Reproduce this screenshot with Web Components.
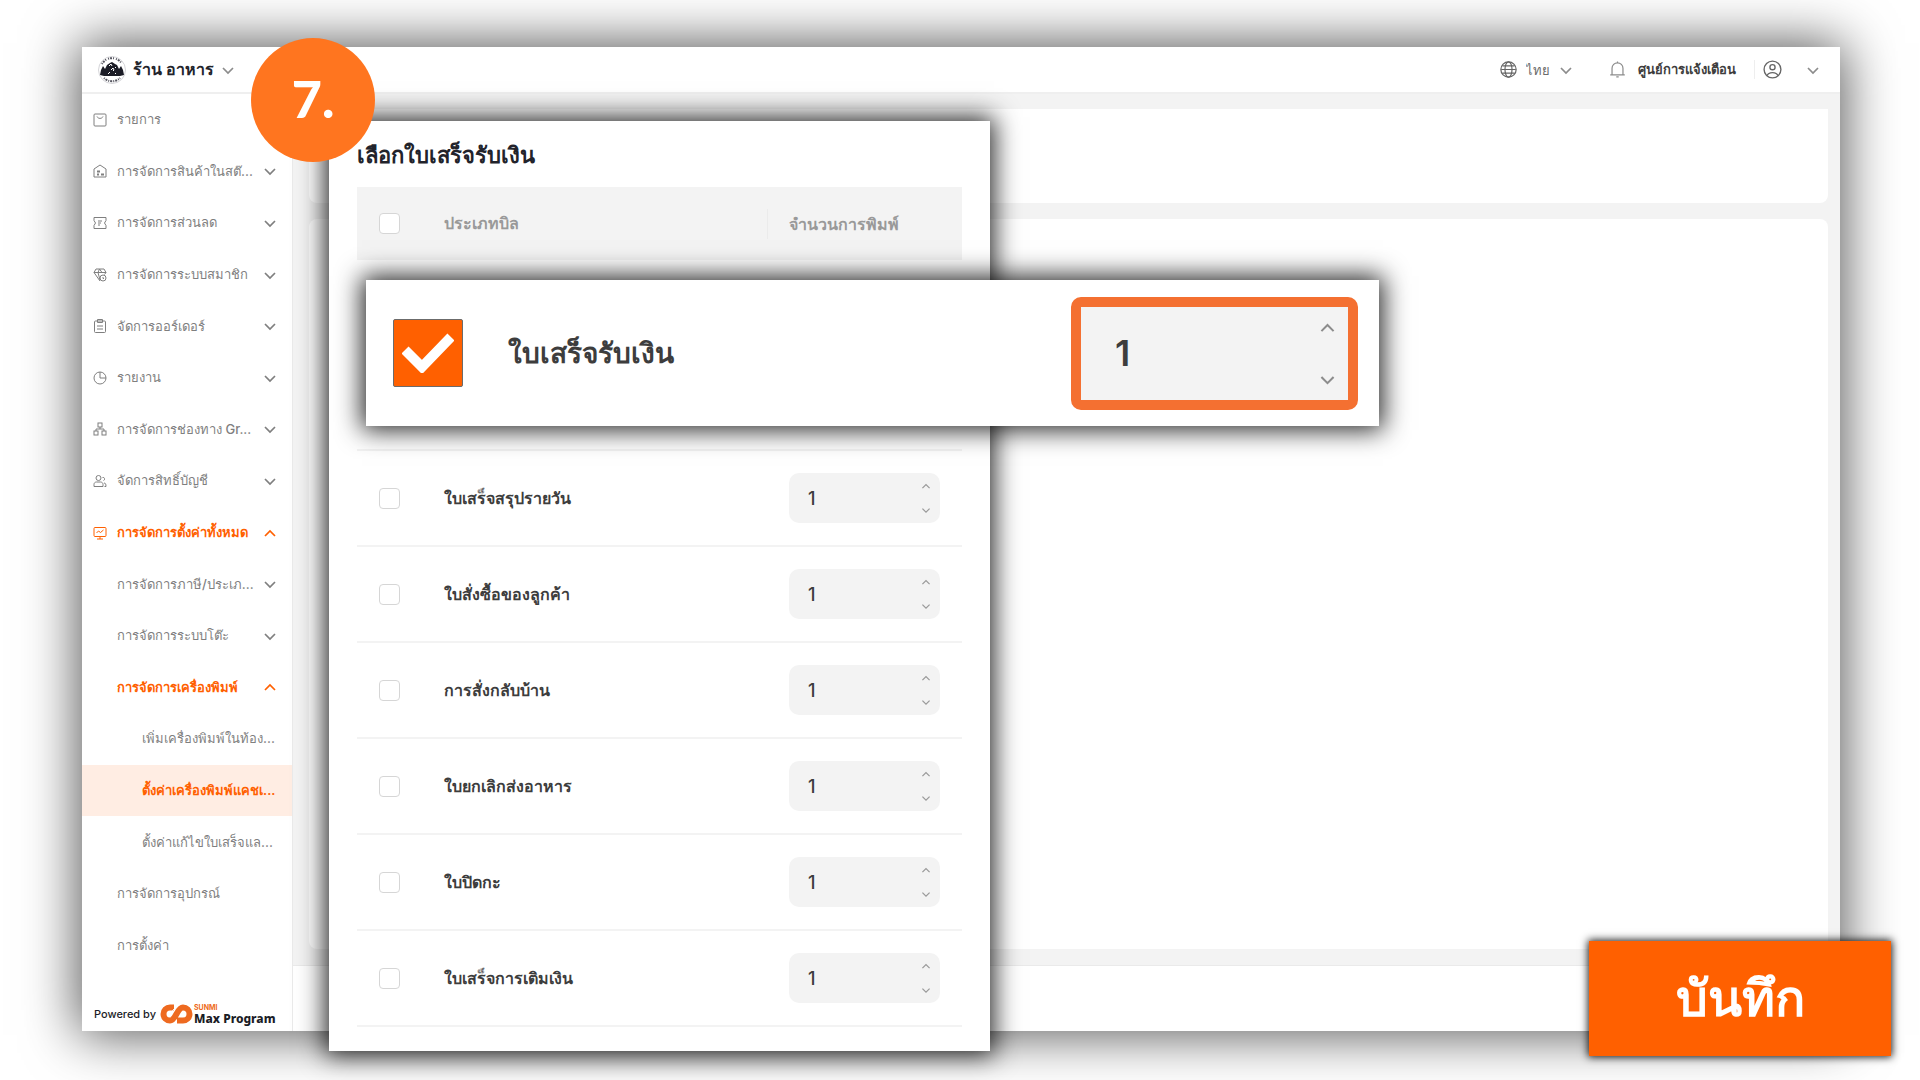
<!DOCTYPE html>
<html lang="th">
<head>
<meta charset="utf-8">
<title>ตั้งค่าเครื่องพิมพ์แคชเชียร์</title>
<style>
  html, body {
    height: 100%;
    margin: 0;
  }

  body {
    background: #fff;
    color: #3d3d3d;
    font-family: Inter, 'Noto Sans', 'Open Sans', sans-serif;
    overflow: hidden;
  }
</style>
</head>
<body>
<printer-page></printer-page>

<script>
const ICONS = {
  down: '<path d="M2 5l5 5 5-5" stroke-width="1.700"/>',
  up: '<path d="M2 10l5-5 5 5" stroke-width="1.700"/>',
  list: '<rect x="1" y="1" width="12" height="12" rx="1"/><path d="M4 3.500c1 2.500 5 2.500 6 0"/>',
  stock: '<path d="M1 5l6-4 6 4v8H1z"/><path d="M4 7.500h3M4 10.500h2M8 10.500h3" stroke-width="2"/>',
  coupon: '<path d="M1 1.500h12v3L11.500 7l1.500 2.500v3H1v-3L2.500 7 1 4.500z"/><path d="M5 5h4M5 7h3M5 9h2"/>',
  member: '<path d="M3 1h8l2 3.500-1.500 2M3 1L1 4.500 7 13M1 4.500h12M5 4.500L7 12M5 4.500L6.500 1 9 4.500"/><circle cx="10" cy="10" r="3"/><path d="M10 9v1.500h1"/>',
  order: '<rect x="1.500" y="2" width="11" height="11.500" rx="1"/><path d="M4.500 3.500h5v-3h-5zM4 7h6M4 10h6"/>',
  report: '<circle cx="7" cy="7" r="6"/><path d="M7 1v6h6"/>',
  channel: '<rect x="5" y="1" width="4" height="4"/><rect x="1" y="9" width="4" height="4"/><rect x="9" y="9" width="4" height="4"/><path d="M7 5v2M3 9V7h8v2"/>',
  people: '<circle cx="5.500" cy="4" r="2.500"/><path d="M1 12.500v-2c0-1.500 1-2.500 2.500-2.500h4C9 8 10 9 10 10.500v2zM9.500 3.500a1.500 1.500 0 1 1 1 3M11 9c1.500 0 2 1 2 3.500h-1.500"/>',
  setup: '<rect x="1" y="1.500" width="12" height="9" rx="1"/><path d="M3.500 7l2-2 2 1.500 3-2.500M4 13h6M7 10.500V13"/>',
  globe: '<circle cx="7" cy="7" r="6.300"/><ellipse cx="7" cy="7" rx="2.900" ry="6.300"/><path d="M1 7h12M2 4h10M2 10h10"/>',
  bell: '<path d="M1 11.500h12M2.500 11.500V6a4.500 4.500 0 0 1 9 0v5.500M7 1.500V.5M6 13h2"/>',
  user: '<circle cx="7" cy="7" r="6.200"/><circle cx="7" cy="5.300" r="1.900"/><path d="M3 11.500c1-3 7-3 8 0"/>'
};

class UiIcon extends HTMLElement {
  constructor() {
    super();
    this.attachShadow({ mode: 'open' });
  }

  connectedCallback() {
    this.shadowRoot.innerHTML = `
      <style>
        :host { display: block; flex: none; width: var(--size, 14px); height: var(--size, 14px); }
        svg { display: block; width: 100%; height: 100%; fill: none; stroke: currentColor; }
      </style>
      <svg viewBox="0 0 14 14" aria-hidden="true">${ICONS[this.getAttribute('name')]}</svg>
    `;
  }
}
customElements.define('ui-icon', UiIcon);

class StoreLogo extends HTMLElement {
  constructor() {
    super();
    this.attachShadow({ mode: 'open' }).innerHTML = `
      <style>
        :host { display: block; width: 28px; height: 28px; }
        svg { display: block; }
      </style>
      <svg width="28" height="28" viewBox="0 0 28 28" aria-hidden="true">
        <circle cx="14" cy="14" r="13.500" fill="#fff" stroke="#d4d4d8"/>
        <path d="M4 8a11.500 11.500 0 0 1 20 0" fill="none" stroke="#55555f" stroke-width="2" stroke-dasharray="1 1 2 1 1 2"/>
        <path d="M6 22a11.500 11.500 0 0 0 16 0" fill="none" stroke="#55555f" stroke-width="2" stroke-dasharray="1 1 2 1"/>
        <path d="M2 19l1-5 2-4 2 3 2-4 3-2 2-1 3 2 2 1 2 4 2-3 2 4 1 5-4 1H6z" fill="#1b1c26"/>
        <path d="M11 10l2-2 1 2M17 11l1 1M13 14l2-2 1 2-1 1M10 18l2-2M17 17l1 1" fill="none" stroke="#fff"/>
      </svg>
    `;
  }
}
customElements.define('store-logo', StoreLogo);

class TopBar extends HTMLElement {
  constructor() {
    super();
    this.attachShadow({ mode: 'open' }).innerHTML = `
      <style>
        :host {
          display: flex;
          align-items: center;
          box-sizing: border-box;
          height: 47px;
          padding: 0 20px 0 16px;
          background: #fff;
          border-bottom: 2px solid #efefef;
        }
        button, select {
          display: flex;
          align-items: center;
          padding: 0;
          border: 0;
          background: none;
          font: inherit;
          color: inherit;
        }
        ui-icon { color: #8c8c8c; }
        .store { gap: 7px; font-size: 16px; font-weight: 600; color: #22232b; }
        .right { display: flex; align-items: center; margin-left: auto; }
        .lang { display: flex; align-items: center; gap: 9px; font-size: 13px; color: #6b6b6b; }
        .lang ui-icon:first-child { --size: 17px; color: #666; }
        select { appearance: none; width: 24px; outline: none; }
        .bell { gap: 12px; margin-left: 36px; font-size: 13px; font-weight: 600; color: #3d3d3d; --size: 17px; }
        .user { gap: 24px; margin-left: 18px; padding-left: 8px; border-left: 1px solid #eee; }
        .user ui-icon:first-child { --size: 19px; color: #666; }
      </style>
      <button class="store"><store-logo></store-logo><span>ร้าน อาหาร</span><ui-icon name="down"></ui-icon></button>
      <div class="right">
        <label class="lang">
          <ui-icon name="globe"></ui-icon>
          <select aria-label="ภาษา"><option>ไทย</option></select>
          <ui-icon name="down"></ui-icon>
        </label>
        <button class="bell"><ui-icon name="bell"></ui-icon><span>ศูนย์การแจ้งเตือน</span></button>
        <button class="user" aria-label="บัญชี"><ui-icon name="user"></ui-icon><ui-icon name="down"></ui-icon></button>
      </div>
    `;
  }
}
customElements.define('top-bar', TopBar);

class NavItem extends HTMLElement {
  constructor() {
    super();
    this.attachShadow({ mode: 'open' });
  }

  connectedCallback() {
    const icon = this.getAttribute('icon');
    const arrow = this.getAttribute('arrow');
    this.shadowRoot.innerHTML = `
      <style>
        :host { display: flex; flex: 1 1 0; min-height: 0; color: #7f7f7f; font-size: 13px; font-weight: 500; }
        :host([active]) { color: #ff6000; font-weight: 600; }
        :host([current]) { background: #ffede3; }
        a {
          display: flex;
          flex: 1;
          align-items: center;
          min-width: 0;
          padding: 0 15px 0 35px;
          color: inherit;
          text-decoration: none;
          white-space: nowrap;
        }
        :host([icon]) a { padding-left: 11px; }
        :host([level='3']) a { padding-left: 60px; }
        .lead { margin-right: 10px; }
        .arrow { margin-left: auto; }
      </style>
      <a href="#">
        ${icon ? `<ui-icon class="lead" name="${icon}"></ui-icon>` : ''}
        <slot></slot>
        ${arrow ? `<ui-icon class="arrow" name="${arrow}"></ui-icon>` : ''}
      </a>
    `;
  }
}
customElements.define('nav-item', NavItem);

class SideNav extends HTMLElement {
  constructor() {
    super();
    this.attachShadow({ mode: 'open' }).innerHTML = `
      <style>
        :host {
          display: flex;
          flex-direction: column;
          flex: none;
          width: 210px;
          background: #fff;
          border-right: 1px solid #eaeaea;
        }
        nav { display: flex; flex-direction: column; flex: 1; min-height: 0; }
        footer {
          display: flex;
          align-items: center;
          height: 34px;
          padding: 26px 0 0 12px;
          font: 500 11px/16px Inter, sans-serif;
          color: #1b1c26;
        }
        svg { margin: 0 1px 0 4px; }
        .brand { display: grid; font: 800 12px/14px 'Noto Sans', sans-serif; white-space: nowrap; }
        .brand small { font: 700 7px/9px Inter, sans-serif; color: #ee6a20; }
      </style>
      <nav>
        <nav-item icon="list">รายการ</nav-item>
        <nav-item icon="stock" arrow="down">การจัดการสินค้าในสต๊...</nav-item>
        <nav-item icon="coupon" arrow="down">การจัดการส่วนลด</nav-item>
        <nav-item icon="member" arrow="down">การจัดการระบบสมาชิก</nav-item>
        <nav-item icon="order" arrow="down">จัดการออร์เดอร์</nav-item>
        <nav-item icon="report" arrow="down">รายงาน</nav-item>
        <nav-item icon="channel" arrow="down">การจัดการช่องทาง Gr...</nav-item>
        <nav-item icon="people" arrow="down">จัดการสิทธิ์บัญชี</nav-item>
        <nav-item icon="setup" arrow="up" active>การจัดการตั้งค่าทั้งหมด</nav-item>
        <nav-item arrow="down">การจัดการภาษี/ประเภ...</nav-item>
        <nav-item arrow="down">การจัดการระบบโต๊ะ</nav-item>
        <nav-item arrow="up" active>การจัดการเครื่องพิมพ์</nav-item>
        <nav-item level="3">เพิ่มเครื่องพิมพ์ในท้อง...</nav-item>
        <nav-item level="3" active current>ตั้งค่าเครื่องพิมพ์แคชเ...</nav-item>
        <nav-item level="3">ตั้งค่าแก้ไขใบเสร็จแล...</nav-item>
        <nav-item>การจัดการอุปกรณ์</nav-item>
        <nav-item>การตั้งค่า</nav-item>
      </nav>
      <footer>
        <span>Powered by</span>
        <svg width="33" height="20" viewBox="0 0 33 20" aria-hidden="true">
          <path d="M14 3.500H10a6.500 6.500 0 0 0 0 13c6 0 7-13 13-13a6.500 6.500 0 0 1 0 13h-6" fill="none" stroke="#ee6a20" stroke-width="6"/>
          <path d="M10 10l4-5" stroke="#fff" stroke-width="1"/>
        </svg>
        <span class="brand"><small>SUNMI</small>Max Program</span>
      </footer>
    `;
  }
}
customElements.define('side-nav', SideNav);

class AppWindow extends HTMLElement {
  constructor() {
    super();
    this.attachShadow({ mode: 'open' }).innerHTML = `
      <style>
        :host {
          display: flex;
          flex-direction: column;
          background: #fff;
          box-shadow: 0 0 50px 4px rgba(0, 0, 0, 0.66);
        }
        .body { display: flex; flex: 1; min-height: 0; }
        main { display: flex; flex-direction: column; flex: 1; min-width: 0; }
        .content {
          display: flex;
          flex-direction: column;
          flex: 1;
          gap: 16px;
          padding: 15px 12px 16px 16px;
          background: #f3f3f3;
        }
        section { height: 94px; background: #fff; border-radius: 0 0 8px 8px; }
        section + section { flex: 1; height: auto; border-radius: 8px; }
        .actions { height: 65px; background: #fff; border-top: 1px solid #eaeaea; }
      </style>
      <top-bar></top-bar>
      <div class="body">
        <side-nav></side-nav>
        <main>
          <div class="content"><section></section><section></section></div>
          <div class="actions"></div>
        </main>
      </div>
    `;
  }
}
customElements.define('app-window', AppWindow);

class CountBox extends HTMLElement {
  constructor() {
    super();
    this.attachShadow({ mode: 'open' });
  }

  connectedCallback() {
    this.shadowRoot.innerHTML = `
      <style>
        :host {
          display: flex;
          box-sizing: border-box;
          width: 151px;
          height: 50px;
          background: #f3f3f3;
          border-radius: 10px;
          color: #3d3d3d;
          font-size: 18px;
          font-weight: 500;
          --size: 10px;
        }
        :host([large]) {
          width: 287px;
          height: 113px;
          border: 10px solid #f47031;
          font-size: 36px;
          font-weight: 600;
          --size: 17px;
        }
        input {
          flex: 1;
          min-width: 0;
          padding: 0 0 0 19px;
          border: 0;
          outline: none;
          background: none;
          font: inherit;
          color: inherit;
          appearance: textfield;
        }
        input::-webkit-inner-spin-button { appearance: none; }
        .steps { display: flex; flex-direction: column; justify-content: center; gap: 2px; padding-right: 9px; }
        button { display: grid; place-items: center; height: 22px; padding: 0; border: 0; background: none; color: #999; }
        :host([large]) input { padding-left: 34px; }
        :host([large]) .steps { gap: 12px; padding-right: 12px; }
        :host([large]) button { height: 40px; color: #8c8c8c; }
      </style>
      <input type="number" value="1" min="1" aria-label="จำนวนการพิมพ์">
      <div class="steps">
        <button aria-label="เพิ่ม"><ui-icon name="up"></ui-icon></button>
        <button aria-label="ลด"><ui-icon name="down"></ui-icon></button>
      </div>
    `;
    const input = this.shadowRoot.querySelector('input');
    const [up, down] = this.shadowRoot.querySelectorAll('button');
    up.addEventListener('click', () => input.stepUp());
    down.addEventListener('click', () => input.stepDown());
  }
}
customElements.define('count-box', CountBox);

const BILLS = ['ใบเสร็จสรุปรายวัน', 'ใบสั่งซื้อของลูกค้า', 'การสั่งกลับบ้าน', 'ใบยกเลิกส่งอาหาร', 'ใบปิดกะ', 'ใบเสร็จการเติมเงิน'];

class BillDialog extends HTMLElement {
  constructor() {
    super();
    const rows = BILLS.map((name, i) => `
      <tr>
        <td><input type="checkbox" id="bill${i}"></td>
        <td><label for="bill${i}">${name}</label></td>
        <td class="count"><count-box></count-box></td>
      </tr>`).join('');

    this.attachShadow({ mode: 'open' }).innerHTML = `
      <style>
        :host {
          display: block;
          padding: 18px 28px 24px;
          background: #fff;
          box-shadow: 0 0 24px 4px rgba(0, 0, 0, 0.85);
        }
        h2 { margin: 0 0 16px; font-size: 22px; line-height: 32px; font-weight: 600; color: #22232b; }
        table { width: 100%; border-collapse: separate; border-spacing: 0; table-layout: fixed; font-size: 16px; }
        th, td { box-sizing: border-box; padding: 0; text-align: left; }
        thead { background: #f3f3f3; color: #999; }
        th { height: 73px; font-weight: 600; }
        td { height: 96px; border-bottom: 2px solid #f3f3f3; }
        label { font-weight: 600; }
        .picked td { height: 191px; }
        .check { width: 87px; }
        .last { width: 195px; }
        .last span { display: block; padding-left: 21px; line-height: 30px; border-left: 1px solid #ebebeb; }
        .count { padding-left: 22px; }
        input {
          display: block;
          appearance: none;
          width: 21px;
          height: 21px;
          margin: 0 0 0 22px;
          background: #fff;
          border: 1px solid #d6d6d6;
          border-radius: 4px;
        }
        input:checked { background: #ff6000; }
      </style>
      <h2>เลือกใบเสร็จรับเงิน</h2>
      <table>
        <thead>
          <tr>
            <th class="check"><input type="checkbox" aria-label="ประเภทบิล"></th>
            <th>ประเภทบิล</th>
            <th class="last"><span>จำนวนการพิมพ์</span></th>
          </tr>
        </thead>
        <tbody>
          <tr class="picked"><td colspan="3"></td></tr>
          ${rows}
        </tbody>
      </table>
    `;
  }
}
customElements.define('bill-dialog', BillDialog);

class BillCallout extends HTMLElement {
  constructor() {
    super();
    this.attachShadow({ mode: 'open' }).innerHTML = `
      <style>
        :host {
          display: flex;
          align-items: center;
          box-sizing: border-box;
          height: 146px;
          padding: 0 21px 0 27px;
          background: #fff;
          box-shadow: 0 0 24px 4px rgba(0, 0, 0, 0.85);
        }
        .box { display: grid; }
        .box > * { grid-area: 1 / 1; }
        input {
          appearance: none;
          width: 70px;
          height: 68px;
          margin: 0;
          border: 1px solid #6b6b6b;
          border-radius: 2px;
        }
        input:checked { background: #ff6000; }
        svg { pointer-events: none; place-self: center; display: none; }
        input:checked + svg { display: block; }
        label { margin-left: 45px; font-size: 28px; font-weight: 600; }
        count-box { margin-left: auto; }
      </style>
      <span class="box">
        <input type="checkbox" id="receipt" checked>
        <svg width="52" height="40" viewBox="0 0 52 40" aria-hidden="true">
          <path d="M3 17l17 17L49 4" fill="none" stroke="#fff" stroke-width="10"/>
        </svg>
      </span>
      <label for="receipt">ใบเสร็จรับเงิน</label>
      <count-box large></count-box>
    `;
  }
}
customElements.define('bill-callout', BillCallout);

class StepBadge extends HTMLElement {
  constructor() {
    super();
    this.attachShadow({ mode: 'open' }).innerHTML = `
      <style>
        :host {
          display: grid;
          place-items: center;
          box-sizing: border-box;
          width: 124px;
          height: 124px;
          padding-bottom: 5px;
          border-radius: 50%;
          background: #ff751f;
          color: #fff;
          font: 900 52px/60px Lato, sans-serif;
        }
      </style>
      <slot></slot>
    `;
  }
}
customElements.define('step-badge', StepBadge);

class SaveButton extends HTMLElement {
  constructor() {
    super();
    this.attachShadow({ mode: 'open' }).innerHTML = `
      <style>
        :host { display: block; box-shadow: 0 0 8px 1px rgba(0, 0, 0, 0.9); }
        button {
          display: block;
          width: 302px;
          height: 115px;
          padding: 0;
          border: 0;
          border-radius: 0;
          background: #ff6000;
          color: #fff;
          font: inherit;
          font-size: 50px;
          font-weight: 600;
        }
      </style>
      <button><slot></slot></button>
    `;
  }
}
customElements.define('save-button', SaveButton);

class PrinterPage extends HTMLElement {
  constructor() {
    super();
    this.attachShadow({ mode: 'open' }).innerHTML = `
      <style>
        :host {
          position: relative;
          display: flex;
          box-sizing: border-box;
          height: 100%;
          min-height: 1080px;
          padding: 47px 80px 49px 82px;
        }
        app-window { flex: 1; min-width: 0; }
        /* layers that float over the window */
        bill-dialog { position: absolute; top: 121px; left: 329px; right: 930px; }
        bill-callout { position: absolute; top: 280px; left: 366px; right: 541px; }
        step-badge { position: absolute; top: 38px; left: 251px; }
        save-button { position: absolute; right: 29px; bottom: 24px; }
      </style>
      <app-window></app-window>
      <bill-dialog></bill-dialog>
      <bill-callout></bill-callout>
      <step-badge>7.</step-badge>
      <save-button>บันทึก</save-button>
    `;
  }
}
customElements.define('printer-page', PrinterPage);
</script>
</body>
</html>
